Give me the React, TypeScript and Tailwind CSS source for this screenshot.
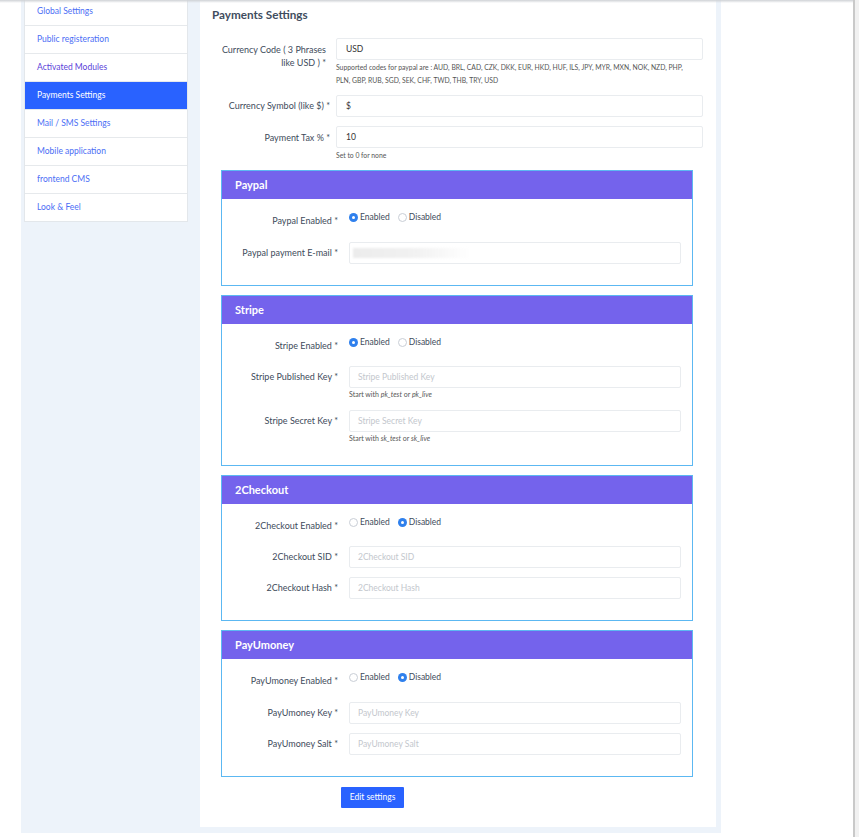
import React from "react";

const sideItems = [
  "Global Settings",
  "Public registeration",
  "Activated Modules",
  "Payments Settings",
  "Mail / SMS Settings",
  "Mobile application",
  "frontend CMS",
  "Look & Feel",
];

function Radio({ checked, label }: { checked: boolean; label: string }) {
  return (
    <span className="flex items-center gap-[2px]">
      {checked ? (
        <span className="flex h-[9px] w-[9px] items-center justify-center rounded-full bg-[#2f80ed]">
          <span className="h-[3px] w-[3px] rounded-full bg-white" />
        </span>
      ) : (
        <span className="h-[9px] w-[9px] rounded-full border border-[#c9ced6] bg-white" />
      )}
      <span>{label}</span>
    </span>
  );
}

function RadioRow({ label, enabled }: { label: string; enabled: boolean }) {
  return (
    <div className="mt-[12px] flex items-start">
      <div className="w-[116px] pt-[4px] text-right leading-[12px]">{label} *</div>
      <div className="ml-[11px] flex gap-[8px] text-[8.5px] leading-[12px]">
        <Radio checked={enabled} label="Enabled" />
        <Radio checked={!enabled} label="Disabled" />
      </div>
    </div>
  );
}

function CardInput({
  label,
  placeholder,
  help,
  mt,
}: {
  label: string;
  placeholder?: string;
  help?: React.ReactNode;
  mt: string;
}) {
  return (
    <div className={mt}>
      <div className="flex items-center">
        <div className="w-[116px] text-right">{label} *</div>
        <div className="ml-[11px] flex h-[22px] flex-1 items-center rounded-[2px] border border-[#e9ecef] px-[8px] text-[8.5px] text-[#c3c7cd]">
          {placeholder}
        </div>
      </div>
      {help && <div className="ml-[127px] mt-[1px] text-[7px] leading-[11px] text-[#555]">{help}</div>}
    </div>
  );
}

function Card({ title, children, pb }: { title: string; children: React.ReactNode; pb: string }) {
  return (
    <div className="ml-[9px] mr-[10px] mt-[9px] border border-[#5cb8f2]">
      <div className="flex h-[28px] items-center bg-[#7463ec] pl-[13px] text-[11px] font-bold text-white">{title}</div>
      <div className={`pr-[11px] text-[9px] text-[#3e4b5b] ${pb}`}>{children}</div>
    </div>
  );
}

export default function App() {
  return (
    <div className="relative flex h-[837px] w-[859px] overflow-hidden bg-white font-['Lato',sans-serif]">
      <div className="flex-1 overflow-hidden">
        <div className="-mt-[4px] ml-[21px] flex w-[700px] items-start gap-[12px] bg-[#edf3fa] pb-[6px] pl-[3px] pr-[5px]">
          {/* sidebar */}
          <div className="w-[164px] border border-[#e3e7eb] bg-white">
            {sideItems.map((s, i) => (
              <div
                key={s}
                className={
                  "flex h-[28px] items-center pl-[12px] text-[8.5px] " +
                  (i > 0 ? "border-t border-[#e6e9ec] " : "") +
                  (s === "Payments Settings"
                    ? "bg-[#2962ff] text-white"
                    : s === "Activated Modules"
                    ? "text-[#5b3fd9]"
                    : "text-[#4b6ef5]")
                }
              >
                {s}
              </div>
            ))}
          </div>

          {/* main */}
          <div className="w-[516px] bg-white pb-[19px] pl-[12px] pr-[13px] pt-[11px]">
            <h2 className="text-[11.7px] font-bold leading-[14px] text-[#3f4d5e]">Payments Settings</h2>

            <div className="mt-[17px] text-[9px] text-[#3e4b5b]">
              <div className="flex items-start">
                <div className="w-[118px] pl-[6px] pr-[4px] pt-[5px] text-right leading-[13px]">
                  Currency Code ( 3 Phrases like USD ) *
                </div>
                <div className="ml-[6px] w-[367px]">
                  <div className="flex h-[22px] items-center rounded-[2px] border border-[#e9ecef] px-[9px] text-[8.5px] text-[#333]">USD</div>
                  <div className="mt-[1px] text-[6.8px] leading-[13px] text-[#555]">
                    Supported codes for paypal are : AUD, BRL, CAD, CZK, DKK, EUR, HKD, HUF, ILS, JPY, MYR, MXN, NOK, NZD, PHP,
                    <br />
                    PLN, GBP, RUB, SGD, SEK, CHF, TWD, THB, TRY, USD
                  </div>
                </div>
              </div>

              <div className="mt-[8px] flex items-center">
                <div className="w-[118px] text-right">Currency Symbol (like $) *</div>
                <div className="ml-[6px] flex h-[22px] w-[367px] items-center rounded-[2px] border border-[#e9ecef] px-[9px] text-[8.5px] text-[#333]">$</div>
              </div>

              <div className="mt-[9px] flex items-start">
                <div className="w-[118px] pt-[5px] text-right">Payment Tax % *</div>
                <div className="ml-[6px] w-[367px]">
                  <div className="flex h-[22px] items-center rounded-[2px] border border-[#e9ecef] px-[9px] text-[8.5px] text-[#333]">10</div>
                  <div className="mt-[1px] text-[6.8px] leading-[12px] text-[#555]">Set to 0 for none</div>
                </div>
              </div>
            </div>

            <Card title="Paypal" pb="pb-[21px]">
              <RadioRow label="Paypal Enabled" enabled={true} />
              <div className="mt-[15px] flex items-center">
                <div className="w-[116px] text-right">Paypal payment E-mail *</div>
                <div className="ml-[11px] flex h-[22px] flex-1 items-center rounded-[2px] border border-[#e9ecef] px-[3px]">
                  <div className="h-[10px] w-[118px] bg-gradient-to-r from-[#ececec] via-[#f1f1f1] to-transparent blur-[1px]" />
                </div>
              </div>
            </Card>

            <Card title="Stripe" pb="pb-[21px]">
              <RadioRow label="Stripe Enabled" enabled={true} />
              <CardInput
                mt="mt-[14px]"
                label="Stripe Published Key"
                placeholder="Stripe Published Key"
                help={
                  <>
                    Start with <i>pk_test</i> or <i>pk_live</i>
                  </>
                }
              />
              <CardInput
                mt="mt-[10px]"
                label="Stripe Secret Key"
                placeholder="Stripe Secret Key"
                help={
                  <>
                    Start with <i>sk_test</i> or <i>sk_live</i>
                  </>
                }
              />
            </Card>

            <Card title="2Checkout" pb="pb-[21px]">
              <RadioRow label="2Checkout Enabled" enabled={false} />
              <CardInput mt="mt-[14px]" label="2Checkout SID" placeholder="2Checkout SID" />
              <CardInput mt="mt-[9px]" label="2Checkout Hash" placeholder="2Checkout Hash" />
            </Card>

            <Card title="PayUmoney" pb="pb-[21px]">
              <RadioRow label="PayUmoney Enabled" enabled={false} />
              <CardInput mt="mt-[15px]" label="PayUmoney Key" placeholder="PayUmoney Key" />
              <CardInput mt="mt-[9px]" label="PayUmoney Salt" placeholder="PayUmoney Salt" />
            </Card>

            <div className="mt-[10px] flex pl-[129px]">
              <button className="h-[21px] w-[63px] rounded-[1px] bg-[#2962ff] text-[8.5px] text-white">Edit settings</button>
            </div>
          </div>
        </div>
      </div>
      <div className="w-[6px] border-l-2 border-[#c9c9c9] bg-[#f1f1f1]" />
      <div className="pointer-events-none absolute left-0 top-0 h-[3px] w-[853px] bg-gradient-to-b from-[#cfd2d6] to-transparent" />
    </div>
  );
}
